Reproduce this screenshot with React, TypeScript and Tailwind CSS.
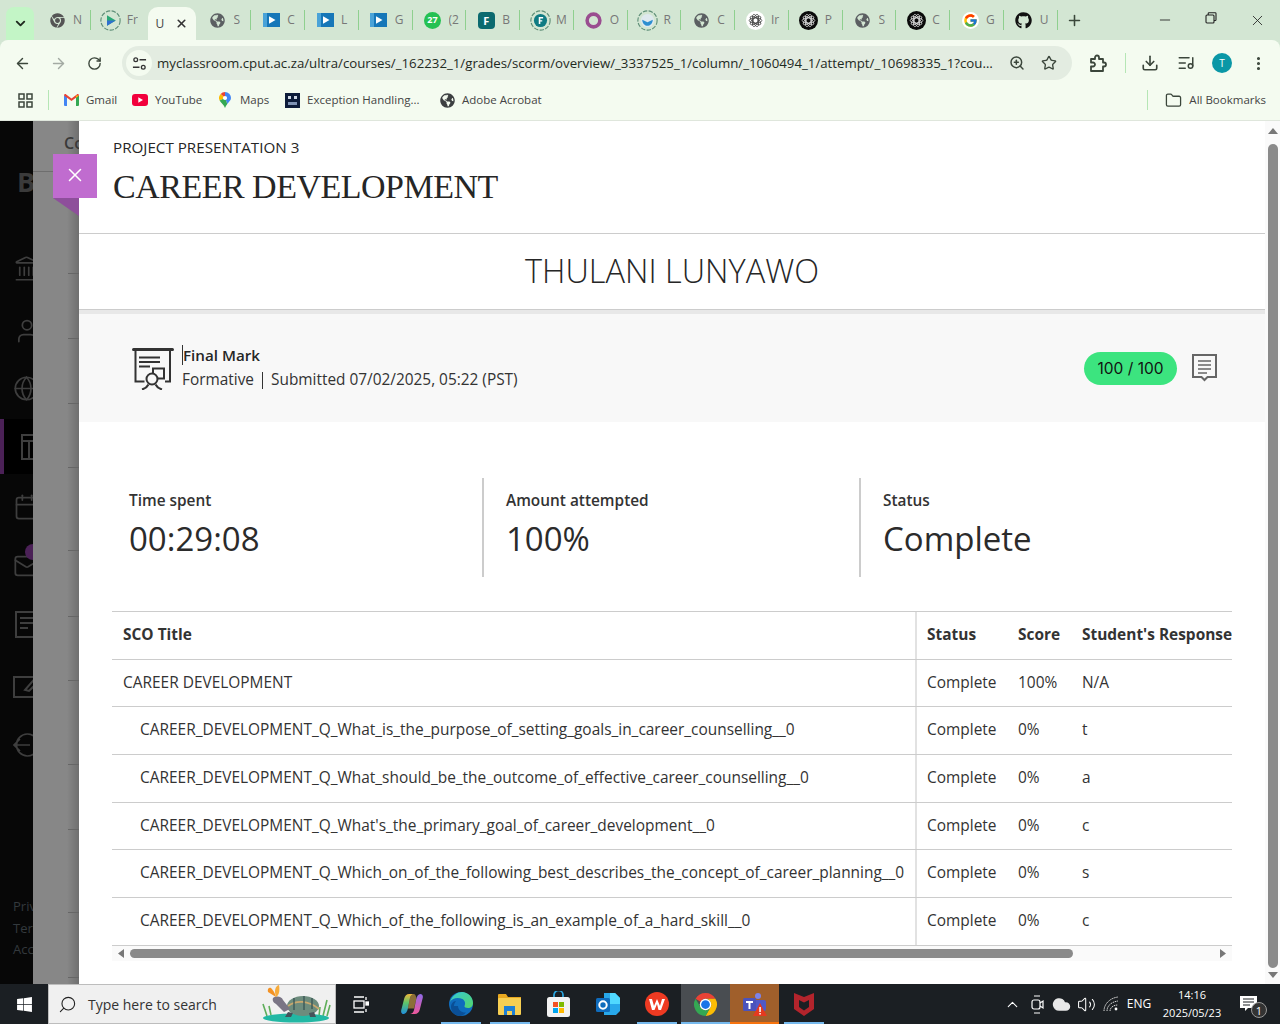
import React from 'react';
import { ArrowLeft, ArrowRight, RotateCw, ZoomIn, Star, Download, ListMusic, MoreVertical, Folder, Minus, X, Plus, ChevronDown, Landmark, User, Globe, Calendar, Mail, ChevronUp, Volume2, Cloud, Search } from 'lucide-react';
import { FaChrome, FaGlobeAmericas, FaGithub, FaWindows } from 'react-icons/fa';
import { FcGoogle } from 'react-icons/fc';

const UI = { fontFamily: '"Open Sans", sans-serif' };

function ChromeColor({ size = 18 }: { size?: number }) {
  return (
    <svg width={size} height={size} viewBox="0 0 24 24">
      <path d="M12 1a11 11 0 0 1 9.53 5.5H12a5.5 5.5 0 0 0-4.76 2.75L2.47 6.5A11 11 0 0 1 12 1z" fill="#ea4335" />
      <path d="M21.53 6.5A11 11 0 0 1 12 23l4.76-8.25A5.5 5.5 0 0 0 12 6.5z" fill="#fbbc04" />
      <path d="M2.47 6.5A11 11 0 0 0 12 23l4.76-8.25a5.5 5.5 0 0 1-9.52 0z" fill="#34a853" />
      <circle cx="12" cy="12" r="5.5" fill="#fff" />
      <circle cx="12" cy="12" r="4.2" fill="#1a73e8" />
    </svg>
  );
}

function Rosette({ dark }: { dark: boolean }) {
  const fg = dark ? '#d8d8d8' : '#444';
  return (
    <svg width="19" height="19" viewBox="0 0 24 24">
      <circle cx="12" cy="12" r="12" fill={dark ? '#0a0a0a' : '#fff'} />
      {[0, 36, 72, 108, 144].map((a) => (
        <ellipse key={a} cx="12" cy="12" rx="8" ry="3.2" fill="none" stroke={fg} strokeWidth="1" transform={`rotate(${a} 12 12)`} />
      ))}
    </svg>
  );
}

function DashRing({ children }: { children: React.ReactNode }) {
  return (
    <svg width="21" height="21" viewBox="0 0 24 24">
      <circle cx="12" cy="12" r="11" fill="none" stroke="#5f8f78" strokeWidth="1.3" strokeDasharray="5 1.6" />
      {children}
    </svg>
  );
}

function VideoIcon() {
  return (
    <svg width="17" height="14" viewBox="0 0 17 14">
      <rect width="17" height="14" fill="#1677b8" />
      <rect width="4" height="14" fill="#4aa3d8" />
      <path d="M6 3.2l6.5 3.8L6 10.8z" fill="#fff" />
    </svg>
  );
}

function TabIcon({ kind }: { kind: string }) {
  switch (kind) {
    case 'chrome':
      return <FaChrome size={15} color="#555" />;
    case 'play':
      return (
        <DashRing>
          <path d="M8 6l10 6-10 6z" fill="#2aa876" />
          <path d="M8 12l10 0-10 6z" fill="#2f6fd0" />
        </DashRing>
      );
    case 'globe':
      return <FaGlobeAmericas size={15} color="#5b5f62" />;
    case 'video':
      return <VideoIcon />;
    case 'whats':
      return (
        <span className="flex h-[17px] w-[17px] items-center justify-center rounded-full bg-[#25c153] text-[9px] font-bold text-white">27</span>
      );
    case 'forms':
      return (
        <span className="flex h-[17px] w-[17px] items-center justify-center rounded-sm bg-[#0b6a6f] text-[11px] font-bold leading-none text-white">F</span>
      );
    case 'ringF':
      return (
        <DashRing>
          <circle cx="12" cy="12" r="7.5" fill="#0f7b83" />
          <path d="M10 8h5v1.6h-3.2v2H14v1.6h-2.2V16H10z" fill="#fff" />
        </DashRing>
      );
    case 'ring':
      return (
        <svg width="17" height="17" viewBox="0 0 24 24">
          <circle cx="12" cy="12" r="9" fill="none" stroke="#9a4d90" strokeWidth="5" />
        </svg>
      );
    case 'shield':
      return (
        <DashRing>
          <circle cx="12" cy="12" r="7.5" fill="#dfe9ef" />
          <path d="M6 11l6 3 6-3c0 4-3 7-6 7s-6-3-6-7z" fill="#2d8fd0" />
        </DashRing>
      );
    case 'ai':
      return <Rosette dark={false} />;
    case 'aiDark':
      return <Rosette dark />;
    case 'google':
      return (
        <span className="flex h-[17px] w-[17px] items-center justify-center rounded-full bg-white">
          <FcGoogle size={15} />
        </span>
      );
    default:
      return <FaGithub size={17} color="#111" />;
  }
}

function Tab({ kind, label, sep = true }: { kind: string; label: string; sep?: boolean }) {
  return (
    <div className="flex h-10 w-[53.75px] shrink-0 items-center">
      <div className="flex h-5 w-[36px] shrink-0 items-center justify-center pl-[4px]">
        <TabIcon kind={kind} />
      </div>
      <span className="w-[11px] overflow-hidden whitespace-nowrap text-[12px] text-[#777]">{label}</span>
      <span className={sep ? 'ml-auto h-5 w-[1px] shrink-0 bg-[#8fd08f]' : 'ml-auto h-5 w-[1px] shrink-0'} />
    </div>
  );
}

const rightTabs: [string, string][] = [
  ['globe', 'S'], ['video', 'C'], ['video', 'L'], ['video', 'G'], ['whats', '(2'], ['forms', 'B'], ['ringF', 'M'], ['ring', 'O'],
  ['shield', 'R'], ['globe', 'C'], ['ai', 'Ir'], ['aiDark', 'P'], ['globe', 'S'], ['aiDark', 'C'], ['google', 'G'], ['github', 'U'],
];

function TabBar() {
  return (
    <div className="flex h-10 items-center bg-[#d3e6d3]">
      <div className="ml-[6px] mt-[7px] flex h-[33px] w-[28px] items-center justify-center rounded-t-lg bg-[#c3f5c6]">
        <ChevronDown size={15} strokeWidth={3} color="#1f2a1f" />
      </div>
      <div className="ml-[3px]"><Tab kind="chrome" label="N" /></div>
      <Tab kind="play" label="Fr" sep={false} />
      <div className="ml-[3px] mt-[7px] flex h-[33px] w-[48px] shrink-0 items-center justify-between rounded-t-[10px] bg-[#f4fbf0] px-2 text-[12px] text-[#444]">
        <span>U</span>
        <X size={13} strokeWidth={3} color="#333" />
      </div>
      <div className="ml-[2px] flex">
        {rightTabs.map(([k, l], i) => (
          <Tab key={i} kind={k} label={l} />
        ))}
      </div>
      <div className="flex w-[34px] items-center justify-center">
        <Plus size={17} strokeWidth={2.2} color="#3a473a" />
      </div>
      <div className="ml-auto flex">
        <div className="flex w-[46px] justify-center"><Minus size={16} strokeWidth={1.3} color="#222" /></div>
        <div className="flex w-[46px] justify-center">
          <svg width="12" height="12" viewBox="0 0 12 12" fill="none" stroke="#222" strokeWidth="1.1">
            <rect x="1" y="3" width="8" height="8" rx="1" />
            <path d="M3.2 3V1.5a.8.8 0 0 1 .8-.8h6.2a.8.8 0 0 1 .8.8v6.2a.8.8 0 0 1-.8.8H9" />
          </svg>
        </div>
        <div className="flex w-[46px] justify-center"><X size={17} strokeWidth={1.2} color="#222" /></div>
      </div>
    </div>
  );
}

function ToolSlot({ children, cls = 'w-9' }: { children: React.ReactNode; cls?: string }) {
  return <div className={`flex h-9 items-center justify-center ${cls}`}>{children}</div>;
}

function Toolbar() {
  return (
    <div className="flex h-11 items-center rounded-t-lg bg-[#f4fbf0] pl-[4px] pt-[2px]">
      <ToolSlot><ArrowLeft size={17} strokeWidth={2} color="#3b463b" /></ToolSlot>
      <ToolSlot><ArrowRight size={17} strokeWidth={2} color="#a3aaa3" /></ToolSlot>
      <ToolSlot><RotateCw size={15} strokeWidth={2.2} color="#3b463b" /></ToolSlot>
      <div className="ml-[10px] flex h-[34px] w-[950px] shrink-0 items-center rounded-full bg-[#e3ece1]">
        <div className="ml-[4px] flex h-[26px] w-[26px] items-center justify-center rounded-full bg-[#f4fbf0]">
          <svg width="15" height="15" viewBox="0 0 16 16" fill="none" stroke="#333" strokeWidth="1.4">
            <circle cx="4" cy="4" r="2" />
            <path d="M8 4h7M1 12h7" />
            <circle cx="12" cy="12" r="2" />
          </svg>
        </div>
        <span className="ml-[5px] w-[838px] truncate pt-[1px] text-[13.25px] text-[#1f2a1f]">myclassroom.cput.ac.za/ultra/courses/_162232_1/grades/scorm/overview/_3337525_1/column/_1060494_1/attempt/_10698335_1?course_id=_162232_1</span>
        <div className="ml-[12px] flex w-[20px] justify-center"><ZoomIn size={16} strokeWidth={2.2} color="#3b463b" /></div>
        <div className="ml-[12px] flex w-[20px] justify-center"><Star size={16} strokeWidth={2} color="#3b463b" /></div>
      </div>
      <div className="flex h-[20px] w-[54px] items-center justify-center border-r border-[#b5e6b5] pr-[1px]">
        <svg width="18" height="19" viewBox="0 0 18 19" fill="none" stroke="#3b463b" strokeWidth="1.8" strokeLinejoin="round">
          <path d="M2 5h4V3.500a2 2 0 0 1 4 0V5h4v3.500h1a2 2 0 0 1 0 4h-1V17H2v-4.500h2a2 2 0 0 0 0-4H2z" />
        </svg>
      </div>
      <div className="ml-[6px] flex">
        <ToolSlot><Download size={18} strokeWidth={2.2} color="#3b463b" /></ToolSlot>
        <ToolSlot><ListMusic size={18} strokeWidth={2} color="#3b463b" /></ToolSlot>
        <ToolSlot>
          <span className="flex h-5 w-5 items-center justify-center rounded-full bg-[#0a97a6] text-[10px] text-white">T</span>
        </ToolSlot>
        <ToolSlot><MoreVertical size={17} strokeWidth={2.4} color="#3b463b" /></ToolSlot>
      </div>
    </div>
  );
}

function Bookmark({ icon, label, cls }: { icon: React.ReactNode; label: string; cls: string }) {
  return (
    <div className={`flex items-center gap-[7px] whitespace-nowrap text-[11.5px] text-[#444] ${cls}`}>
      <div className="flex w-[16px] justify-center">{icon}</div>
      <span>{label}</span>
    </div>
  );
}

function BookmarksBar() {
  return (
    <div className="flex h-[37px] items-center border-b border-[#dfe6dc] bg-[#f4fbf0] pb-[4px]">
      <svg className="ml-[18px]" width="15" height="15" viewBox="0 0 15 15" fill="none" stroke="#3b463b" strokeWidth="1.5">
        <rect x="1" y="1" width="5" height="5" />
        <rect x="9" y="1" width="5" height="5" />
        <rect x="1" y="9" width="5" height="5" />
        <rect x="9" y="9" width="5" height="5" />
      </svg>
      <span className="ml-[15px] h-5 w-[1px] bg-[#b5e6b5]" />
      <div className="ml-[14px] flex">
        <Bookmark
          cls="w-[69px]"
          label="Gmail"
          icon={
            <svg width="15" height="12" viewBox="0 0 15 12">
              <path d="M0 1.5h3v10.5H1a1 1 0 0 1-1-1z" fill="#4285f4" />
              <path d="M12 1.5h3V11a1 1 0 0 1-1 1h-2z" fill="#34a853" />
              <path d="M0 1.5C0 .3 1.3-.3 2.2.4L7.5 4.4l5.3-4c.9-.7 2.2-.1 2.2 1.1l-3 2.2L7.5 7 3 3.7z" fill="#ea4335" />
              <path d="M12 1.5l3 0-3 2.2z" fill="#fbbc04" />
            </svg>
          }
        />
        <Bookmark
          cls="w-[85px]"
          label="YouTube"
          icon={
            <svg width="16" height="12" viewBox="0 0 16 12">
              <rect width="16" height="12" rx="3" fill="#f2003c" />
              <path d="M6.3 3.2L11 6l-4.7 2.8z" fill="#fff" />
            </svg>
          }
        />
        <Bookmark
          cls="w-[67px]"
          label="Maps"
          icon={
            <svg width="12" height="16" viewBox="0 0 12 16">
              <path d="M6 0a6 6 0 0 1 6 6L6 6z" fill="#4285f4" />
              <path d="M6 0a6 6 0 0 0-4.4 2L6 6z" fill="#ea4335" />
              <path d="M1.6 2A6 6 0 0 0 .6 8.5L6 6z" fill="#fbbc04" />
              <path d="M12 6c0 2.500-2.200 3.700-3.700 6L6 6z" fill="#4285f4" />
              <path d="M.6 8.500C2 11 5 12.500 6 16c.4-1.500 1.300-2.800 2.300-4L6 6z" fill="#34a853" />
              <circle cx="6" cy="6" r="2.100" fill="#fff" />
            </svg>
          }
        />
        <Bookmark
          cls="w-[155px]"
          label="Exception Handling..."
          icon={
            <svg width="15" height="15" viewBox="0 0 15 15">
              <rect width="15" height="15" fill="#0d1c3a" />
              <path d="M3 3h3v3H3zM9 3h3v3H9z" fill="#cfd8e6" />
              <rect x="3" y="9" width="9" height="3" fill="#7f93b5" />
            </svg>
          }
        />
        <Bookmark cls="" label="Adobe Acrobat" icon={<FaGlobeAmericas size={15} color="#3c3f41" />} />
      </div>
      <div className="ml-auto flex items-center pr-[14px]">
        <span className="mr-[17px] h-5 w-[1px] bg-[#b5e6b5]" />
        <Folder size={17} strokeWidth={1.8} color="#3b463b" />
        <span className="ml-[7px] whitespace-nowrap text-[11.5px] text-[#444]">All Bookmarks</span>
      </div>
    </div>
  );
}

function SideIcon({ cls, children }: { cls: string; children: React.ReactNode }) {
  return <div className={`relative flex w-[60px] shrink-0 pl-[13px] ${cls}`}>{children}</div>;
}

function Sidebar() {
  const c = '#3e3e3e';
  return (
    <div className="flex w-[33px] shrink-0 flex-col overflow-hidden bg-[#070707]">
      <div className="mt-[46px] ml-[17px] w-[40px] text-[27px] font-bold leading-[30px] text-[#3a3a3a]">Bb</div>
      <SideIcon cls="mt-[58px]"><Landmark size={27} strokeWidth={1.5} color={c} /></SideIcon>
      <SideIcon cls="mt-[35px]"><User size={28} strokeWidth={1.5} color={c} /></SideIcon>
      <SideIcon cls="mt-[30px]"><Globe size={27} strokeWidth={1.5} color={c} /></SideIcon>
      <div className="mt-[17px] flex h-[55px] w-[60px] shrink-0 items-center border-l-4 border-[#4b2157] bg-black pl-[17px]">
        <svg width="27" height="26" viewBox="0 0 27 26" fill="none" stroke={c} strokeWidth="2" className="shrink-0">
          <rect x="1" y="1" width="25" height="24" />
          <path d="M1 7h25M8 7v18M13 13h13" />
        </svg>
      </div>
      <SideIcon cls="mt-[19px]"><Calendar size={28} strokeWidth={1.5} color={c} /></SideIcon>
      <SideIcon cls="mt-[31px]">
        <Mail size={28} strokeWidth={1.5} color={c} />
        <span className="absolute left-[25px] top-[-8px] h-4 w-4 rounded-full bg-[#4b2157]" />
      </SideIcon>
      <SideIcon cls="mt-[31px]">
        <svg width="27" height="27" viewBox="0 0 27 27" fill="none" stroke={c} strokeWidth="2" className="ml-[2px]">
          <rect x="1" y="1" width="22" height="25" />
          <path d="M5 7h14M5 12h14M5 17h8" />
        </svg>
      </SideIcon>
      <SideIcon cls="mt-[36px]">
        <svg width="30" height="24" viewBox="0 0 30 24" fill="none" stroke={c} strokeWidth="2">
          <rect x="1" y="3" width="24" height="20" />
          <path d="M12 16l12-14 4 3-12 12z" />
        </svg>
      </SideIcon>
      <SideIcon cls="mt-[33px]">
        <svg width="28" height="28" viewBox="0 0 28 28" fill="none" stroke={c} strokeWidth="1.7">
          <path d="M22 6a11 11 0 1 0 0 16M1 14h16M7 8l-6 6 6 6" />
        </svg>
      </SideIcon>
      <div className="mt-[137px] w-[60px] shrink-0 pl-[13px] text-[13px] leading-[21.5px] text-[#33393d]">
        <div>Privacy</div>
        <div>Terms</div>
        <div>Accessibility</div>
      </div>
    </div>
  );
}

const ticks = ['mt-[101px]', 'mt-[64px]', 'mt-[64px]', 'mt-[63px]', 'mt-[82px]', 'mt-[65px]', 'mt-[63px]', 'mt-[83px]', 'mt-[64px]', 'mt-[82px]', 'mt-[64px]'];

function Backdrop() {
  return (
    <div className="flex w-[46px] shrink-0 flex-col overflow-hidden bg-[linear-gradient(90deg,#878787_0,#878787_74%,#6f6f6f_100%)]">
      <div className="flex h-[51px] shrink-0 items-end overflow-hidden border-b border-[#6e6e6e] pb-[18px] pl-[31px] text-[16px] font-semibold leading-5 text-[#3a3a3a]">Course</div>
      {ticks.map((t, i) => (
        <div key={i} className={`ml-[35px] h-[1px] w-[11px] shrink-0 bg-[#666] ${t}`} />
      ))}
    </div>
  );
}

function PresentationIcon() {
  return (
    <svg width="42" height="43" viewBox="0 0 42 43" fill="none" stroke="#333" strokeWidth="2" className="shrink-0">
      <path d="M1.500 2.500h39" strokeWidth="3" strokeLinecap="round" />
      <path d="M3.500 3.500v31h9M38 3.500v31h-5" />
      <path d="M7 10.500h21M7 15h21M7 19.500h11" strokeWidth="1.800" />
      <rect x="21" y="21.500" width="11" height="10" />
      <circle cx="20" cy="32" r="5.500" fill="#f8f8f8" />
      <path d="M10 42.500c3-1 5-2 6.500-5M30 42.500c-3-1-5-2-6.500-5" />
    </svg>
  );
}

function CommentIcon() {
  return (
    <svg width="25" height="28" viewBox="0 0 25 28" fill="none" stroke="#666" className="shrink-0">
      <path d="M1 1h23v22h-8.500l-3 3-3-3H1z" strokeWidth="2" />
      <path d="M6 7h13M6 11h13M6 15h13M6 19h9" strokeWidth="1.600" />
    </svg>
  );
}

function Stat({ label, value, cls }: { label: string; value: string; cls: string }) {
  return (
    <div className={`h-[99px] pt-[13px] ${cls}`}>
      <div className="text-[15.4px] font-semibold leading-5 text-[#333]">{label}</div>
      <div className="mt-[4px] text-[33px] leading-[48px] text-[#2b2b2b]">{value}</div>
    </div>
  );
}

type Row = { title: string; indent?: boolean; status: string; score: string; resp: string; h: string; pad: string };
const rows: Row[] = [
  { title: 'CAREER DEVELOPMENT', status: 'Complete', score: '100%', resp: 'N/A', h: 'h-[47px]', pad: 'pb-[2px]' },
  { title: 'CAREER_DEVELOPMENT_Q_What_is_the_purpose_of_setting_goals_in_career_counselling__0', indent: true, status: 'Complete', score: '0%', resp: 't', h: 'h-[48px]', pad: 'pb-[4px]' },
  { title: 'CAREER_DEVELOPMENT_Q_What_should_be_the_outcome_of_effective_career_counselling__0', indent: true, status: 'Complete', score: '0%', resp: 'a', h: 'h-[48px]', pad: 'pb-[4px]' },
  { title: "CAREER_DEVELOPMENT_Q_What's_the_primary_goal_of_career_development__0", indent: true, status: 'Complete', score: '0%', resp: 'c', h: 'h-[47px]', pad: 'pb-[2px]' },
  { title: 'CAREER_DEVELOPMENT_Q_Which_on_of_the_following_best_describes_the_concept_of_career_planning__0', indent: true, status: 'Complete', score: '0%', resp: 's', h: 'h-[48px]', pad: 'pb-[4px]' },
  { title: 'CAREER_DEVELOPMENT_Q_Which_of_the_following_is_an_example_of_a_hard_skill__0', indent: true, status: 'Complete', score: '0%', resp: 'c', h: 'h-[48px]', pad: 'pb-[4px]' },
];

function ScoTable() {
  return (
    <div className="mx-[33px] mt-[34px] w-[1120px] border-t border-[#ccc] text-[15.45px] leading-5 text-[#333]">
      <div className="grid h-[48px] grid-cols-[805px_91px_64px_160px] items-stretch overflow-hidden border-b border-[#ccc] font-bold">
        <div className="flex items-center border-r-2 border-[#e2e2e2] pb-[4px] pl-[11px]">SCO Title</div>
        <div className="flex items-center pb-[4px] pl-[10px]">Status</div>
        <div className="flex items-center pb-[4px] pl-[10px]">Score</div>
        <div className="flex items-center whitespace-nowrap pb-[4px] pl-[10px]">Student's Response</div>
      </div>
      {rows.map((r, i) => (
        <div key={i} className={`grid grid-cols-[805px_91px_64px_160px] items-stretch border-b border-[#ccc] ${r.h}`}>
          <div className={`flex items-center whitespace-nowrap border-r-2 border-[#e2e2e2] ${r.pad} ${r.indent ? 'pl-[28px]' : 'pl-[11px]'}`}>{r.title}</div>
          <div className={`flex items-center pl-[10px] ${r.pad}`}>{r.status}</div>
          <div className={`flex items-center pl-[10px] ${r.pad}`}>{r.score}</div>
          <div className={`flex items-center pl-[10px] ${r.pad}`}>{r.resp}</div>
        </div>
      ))}
      <div className="flex h-[15px] items-center bg-[#fafafa]">
        <div className="flex w-[18px] justify-center">
          <svg width="6" height="9" viewBox="0 0 6 9"><path d="M6 0v9L0 4.500z" fill="#777" /></svg>
        </div>
        <div className="h-[9px] w-[943px] rounded-full bg-[#8a8a8a]" />
        <div className="ml-auto flex w-[18px] justify-center">
          <svg width="6" height="9" viewBox="0 0 6 9"><path d="M0 0v9l6-4.500z" fill="#777" /></svg>
        </div>
      </div>
    </div>
  );
}

function Panel() {
  return (
    <div className="flex w-[1186px] shrink-0 flex-col bg-white">
      <div className="h-[113px] shrink-0 border-b border-[#ccc] pl-[34px] pt-[16px]">
        <div className="text-[15.2px] leading-5 text-[#262626]">PROJECT PRESENTATION 3</div>
        <div className="mt-[10px] text-[34px] leading-[40px] tracking-[-0.5px] text-[#262626]" style={{ fontFamily: '"Liberation Serif", serif' }}>CAREER DEVELOPMENT</div>
      </div>
      <div className="flex h-[76px] shrink-0 items-center justify-center border-b border-[#ccc] pb-[1px] text-[32.5px] font-light text-[#262626]">THULANI LUNYAWO</div>
      <div className="flex h-[112px] shrink-0 items-center border-t-4 border-[#e8e8e8] bg-[#f8f8f8] pl-[53px] pr-[48px]">
        <PresentationIcon />
        <div className="ml-[8px] pb-[1px]">
          <div className="w-fit border-l border-[#333] text-[15.2px] font-semibold leading-5 text-[#262626]">Final Mark</div>
          <div className="mt-[5px] flex h-5 items-center text-[15.4px] text-[#333]">
            <span>Formative</span>
            <span className="mx-[8px] h-[17px] w-[1px] bg-[#333]" />
            <span>Submitted 07/02/2025, 05:22 (PST)</span>
          </div>
        </div>
        <div className="ml-auto flex h-[33px] w-[93px] items-center justify-center rounded-full bg-[#3ce47f] pt-[1px] text-[15.5px] text-[#111]" style={{ fontFamily: '"Inter", sans-serif' }}>100 / 100</div>
        <div className="ml-[15px]"><CommentIcon /></div>
      </div>
      <div className="ml-[33px] mt-[56px] flex">
        <Stat label="Time spent" value="00:29:08" cls="w-[370px] pl-[17px]" />
        <Stat label="Amount attempted" value="100%" cls="w-[377px] border-l-2 border-[#ccc] pl-[22px]" />
        <Stat label="Status" value="Complete" cls="border-l-2 border-[#ccc] pl-[22px]" />
      </div>
      <ScoTable />
    </div>
  );
}

function PageScroll() {
  return (
    <div className="flex w-[15px] shrink-0 flex-col items-center bg-[#fafafa] pl-[3px] pr-[2px]">
      <svg className="mt-[7px]" width="10" height="6" viewBox="0 0 10 6"><path d="M5 0l5 6H0z" fill="#777" /></svg>
      <div className="mt-[10px] h-[824px] w-[10px] rounded-full bg-[#8a8a8a]" />
      <svg className="mt-[4px]" width="10" height="6" viewBox="0 0 10 6"><path d="M0 0h10L5 6z" fill="#777" /></svg>
    </div>
  );
}

function Turtle() {
  return (
    <svg width="72" height="40" viewBox="0 0 72 40" className="shrink-0">
      <path d="M6 32L2 20M10 31l-2-9M62 32l4-16M66 32l3-11M58 32l1-9" stroke="#5fae5a" strokeWidth="1.600" fill="none" />
      <ellipse cx="35" cy="34" rx="33" ry="4.500" fill="#22b8a4" />
      <ellipse cx="42" cy="22" rx="16" ry="10" fill="#6d8c7d" />
      <path d="M27 22c8-6 20-6 31 3" stroke="#c9a86e" strokeWidth="1.800" fill="none" />
      <path d="M33 14v12M43 12v14M51 14v11" stroke="#3f5b5a" strokeWidth="1.500" />
      <path d="M12 14c4-3 9-1 10 2l7 9-6 3-8-8c-2-1-4-3-3-6z" fill="#7a7585" />
      <path d="M27 28l-3 5h6l2-4zM48 29l1 4h6l-2-5z" fill="#45525a" />
      <path d="M15 13L7 8c-1-3 1-5 3-4 2 2 4 5 5 9z" fill="#f39224" />
      <path d="M15 13c3-2 4-6 3-12-4 1-5 6-3 12z" fill="#f7ab3a" />
    </svg>
  );
}

function Slot({ children, bar, cls = '' }: { children: React.ReactNode; bar?: string; cls?: string }) {
  return (
    <div className={`relative flex h-10 w-[49px] shrink-0 items-center justify-center ${cls}`}>
      {children}
      {bar && <span className={`absolute bottom-0 h-[2px] ${bar}`} />}
    </div>
  );
}

function Taskbar() {
  return (
    <div className="flex h-10 shrink-0 items-center bg-[#1b1f23] text-white">
      <div className="flex h-10 w-[48px] items-center justify-center">
        <FaWindows size={17} color="#fff" />
      </div>
      <div className="flex h-10 w-[288px] items-center overflow-hidden border border-[#bdbdbd] bg-[#f0f0f0] pl-[9px]">
        <Search size={19} strokeWidth={1.4} color="#222" className="-scale-x-100" />
        <span className="ml-[11px] text-[14px] text-[#333]">Type here to search</span>
        <div className="ml-auto pr-[2px]"><Turtle /></div>
      </div>
      <Slot>
        <svg width="17" height="17" viewBox="0 0 17 17" fill="none" stroke="#fff" strokeWidth="1.300">
          <path d="M2 1h10M2 16h10" />
          <rect x="2" y="5" width="10" height="7" />
          <path d="M14 1v3M14 13v3" />
          <rect x="14" y="6" width="2.500" height="3" fill="#fff" />
        </svg>
      </Slot>
      <Slot cls="ml-[2px]">
        <svg width="22" height="24" viewBox="0 0 24 24">
          <defs>
            <linearGradient id="cpa" x1="0" y1="0" x2="0" y2="1">
              <stop offset="0" stopColor="#f2b63a" />
              <stop offset=".45" stopColor="#5cc46a" />
              <stop offset="1" stopColor="#1f8fe0" />
            </linearGradient>
            <linearGradient id="cpb" x1="0" y1="0" x2="0" y2="1">
              <stop offset="0" stopColor="#8f6be8" />
              <stop offset="1" stopColor="#f0589a" />
            </linearGradient>
          </defs>
          <path d="M9 1h5c-2.500.5-3.500 2-4.200 4.500L7.500 17C6.800 20.500 5 23 3 23c-2.300 0-3.300-2-2.700-4.500L3.500 6C4.300 3 6 1 9 1z" fill="url(#cpa)" />
          <path d="M15 23h-5c2.500-.5 3.500-2 4.200-4.500L16.500 7C17.200 3.500 19 1 21 1c2.300 0 3.300 2 2.700 4.500L20.500 18C19.700 21 18 23 15 23z" fill="url(#cpb)" />
          <path d="M14 1c-2.500.5-3.500 2-4.200 4.500L7.500 17h6.700l2.300-10c.4-2.500-.6-6-2.500-6z" fill="#e8b04a" opacity=".55" />
        </svg>
      </Slot>
      <Slot bar="w-10 bg-[#76b9ed]">
        <svg width="24" height="24" viewBox="0 0 24 24">
          <defs>
            <linearGradient id="ed" x1="0" y1="0" x2="1" y2="1">
              <stop offset="0" stopColor="#36c9d3" />
              <stop offset="1" stopColor="#54d66a" />
            </linearGradient>
          </defs>
          <circle cx="12" cy="12" r="12" fill="#0f6cbd" />
          <path d="M1 10C3 3 9 0 13 0c6 0 11 5 11 11 0 3-2 5-5 5-2 0-4-1-3.500-2 1-2 1-5-2-7C9 5 3 6 1 10z" fill="url(#ed)" />
          <path d="M9 14c0 4 4 7 8 6.500-2 2-4 3.500-6 3.500-5 0-9-4-9-9 0-3 2-6 5-6-1 1.500-2 3-2 5z" fill="#0a4f96" />
        </svg>
      </Slot>
      <Slot bar="w-10 bg-[#76b9ed]">
        <svg width="23" height="21" viewBox="0 0 23 21">
          <path d="M0 1a1 1 0 0 1 1-1h7l2 3h13v3H0z" fill="#e8a820" />
          <rect y="4" width="23" height="17" rx="1" fill="#f7cf52" />
          <path d="M6 12h11v9h-3v-4H9v4H6z" fill="#1e7fd4" />
        </svg>
      </Slot>
      <Slot>
        <svg width="23" height="26" viewBox="0 0 23 26">
          <path d="M7 7V4a4.500 4.500 0 0 1 9 0v3" fill="none" stroke="#2aa6e0" strokeWidth="1.700" />
          <rect y="6" width="23" height="20" rx="2.500" fill="#f2f2f2" />
          <rect x="6" y="11" width="5" height="5" fill="#f25022" />
          <rect x="12" y="11" width="5" height="5" fill="#7fba00" />
          <rect x="6" y="17" width="5" height="5" fill="#00a4ef" />
          <rect x="12" y="17" width="5" height="5" fill="#ffb900" />
        </svg>
      </Slot>
      <Slot>
        <svg width="24" height="24" viewBox="0 0 24 24">
          <path d="M8 1h11l5 5v13l-4 4H8z" fill="#28a8ea" />
          <path d="M14 1h5l5 5v6h-10z" fill="#50d9ff" />
          <rect x="0" y="6" width="14" height="14" rx="1.500" fill="#0f6cbd" />
          <circle cx="7" cy="13" r="3.700" fill="none" stroke="#fff" strokeWidth="2" />
        </svg>
      </Slot>
      <Slot bar="w-[40px] bg-[#76b9ed]">
        <svg width="24" height="24" viewBox="0 0 24 24">
          <circle cx="12" cy="12" r="12" fill="#ee3a22" />
          <path d="M4 7l3 0 2 7 3-7 3 7 2-7 3 0-4 11h-2.500L12 12l-2.500 6H7z" fill="#fff" />
        </svg>
      </Slot>
      <Slot bar="w-full bg-[#76b9ed]" cls="bg-[#494d51]">
        <ChromeColor size={25} />
      </Slot>
      <Slot bar="w-full bg-[#f7730e]" cls="bg-[#a05f2b]">
        <svg width="26" height="26" viewBox="0 0 26 26">
          <circle cx="16" cy="5" r="3" fill="#7b83eb" />
          <rect x="10" y="9" width="14" height="11" rx="2" fill="#5059c9" />
          <rect x="1" y="7" width="13" height="13" rx="1.500" fill="#4b53bc" />
          <path d="M4 10h7v2H8.500v6h-2v-6H4z" fill="#fff" />
          <path d="M18 12l7 13H11z" fill="#e5391f" />
          <rect x="17.300" y="16" width="1.500" height="5" fill="#fff" />
          <rect x="17.300" y="22" width="1.500" height="1.500" fill="#fff" />
        </svg>
      </Slot>
      <Slot bar="w-10 bg-[#76b9ed]">
        <svg width="22" height="26" viewBox="0 0 22 26">
          <path d="M1 2l10 4 10-4v16l-10 7-10-7z" fill="#b3242c" />
          <path d="M6 9l5 2.500L16 9v7l-5 3.500L6 16z" fill="#1b1f23" />
        </svg>
      </Slot>
      <div className="ml-auto flex items-center pr-[13px] text-[12px]" style={UI}>
        <div className="flex w-[24.500px] justify-center"><ChevronUp size={17} strokeWidth={1.500} /></div>
        <div className="flex w-[24.500px] justify-center">
          <svg width="13" height="19" viewBox="0 0 13 19" fill="none" stroke="#fff" strokeWidth="1.200">
            <path d="M3 1h6M3 18h6" />
            <rect x="1" y="5" width="8" height="9" rx="2" />
            <path d="M9 8l3-2v7l-3-2" />
          </svg>
        </div>
        <div className="flex w-[24.500px] justify-center"><Cloud size={19} fill="#e8e8e8" color="#e8e8e8" /></div>
        <div className="flex w-[24.500px] justify-center"><Volume2 size={19} strokeWidth={1.300} /></div>
        <div className="flex w-[24.500px] justify-center">
          <svg width="16" height="16" viewBox="0 0 16 16" fill="none" stroke="#d8d8d8" strokeWidth="1">
            <path d="M1 15C1 8 7 2 15 1M4 15c0-5 4-9 11-10M7 15c0-3 3-6 8-6" strokeDasharray="1.500 .7" />
            <circle cx="13" cy="13" r="1.400" fill="#fff" stroke="none" />
          </svg>
        </div>
        <div className="w-[32px] text-center">ENG</div>
        <div className="w-[74px] text-center text-[11px] leading-[18px]">
          <div>14:16</div>
          <div>2025/05/23</div>
        </div>
        <div className="relative flex w-[38px] justify-center">
          <svg width="17" height="16" viewBox="0 0 17 16">
            <path d="M0 0h17v12H8l-3 3v-3H0z" fill="#fff" />
            <path d="M3 3h11M3 6h11M3 9h7" stroke="#1b1f23" strokeWidth="1" />
          </svg>
          <span className="absolute left-[22px] top-[6px] flex h-[16px] w-[16px] items-center justify-center rounded-full border border-[#999] bg-[#333] text-[11px] leading-none">1</span>
        </div>
      </div>
    </div>
  );
}

export default function App() {
  return (
    <div className="flex h-[1024px] w-[1280px] flex-col overflow-hidden bg-[#d3e6d3]" style={UI}>
      <TabBar />
      <Toolbar />
      <BookmarksBar />
      <div className="relative flex h-[863px] overflow-hidden">
        <Sidebar />
        <Backdrop />
        <Panel />
        <PageScroll />
        <div className="absolute left-[53px] top-[33px]">
          <div className="flex h-[44px] w-[44px] items-center justify-center bg-[#c06ccf] pb-[2px]">
            <X size={22} strokeWidth={1.700} color="#fff" />
          </div>
          <svg width="26" height="18" viewBox="0 0 26 18" className="block"><path d="M0 0h26v18z" fill="#8e4f9b" /></svg>
        </div>
      </div>
      <Taskbar />
    </div>
  );
}
